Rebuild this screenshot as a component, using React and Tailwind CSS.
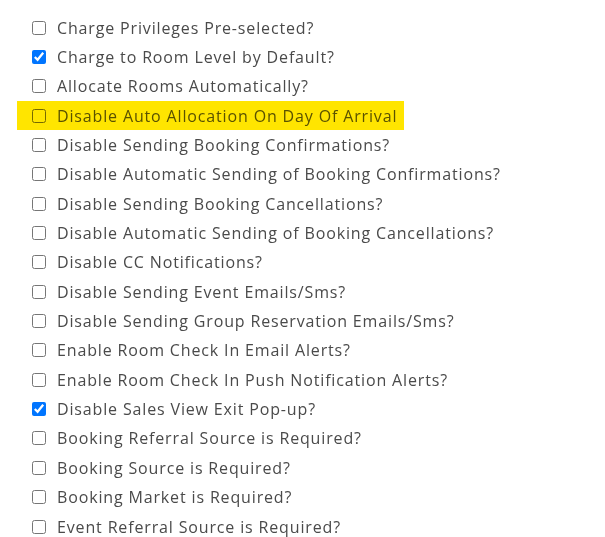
const OPTIONS = [
  { label: "Charge Privileges Pre-selected?", checked: false },
  { label: "Charge to Room Level by Default?", checked: true },
  { label: "Allocate Rooms Automatically?", checked: false },
  { label: "Disable Auto Allocation On Day Of Arrival", checked: false, highlight: true },
  { label: "Disable Sending Booking Confirmations?", checked: false },
  { label: "Disable Automatic Sending of Booking Confirmations?", checked: false },
  { label: "Disable Sending Booking Cancellations?", checked: false },
  { label: "Disable Automatic Sending of Booking Cancellations?", checked: false },
  { label: "Disable CC Notifications?", checked: false },
  { label: "Disable Sending Event Emails/Sms?", checked: false },
  { label: "Disable Sending Group Reservation Emails/Sms?", checked: false },
  { label: "Enable Room Check In Email Alerts?", checked: false },
  { label: "Enable Room Check In Push Notification Alerts?", checked: false },
  { label: "Disable Sales View Exit Pop-up?", checked: true },
  { label: "Booking Referral Source is Required?", checked: false },
  { label: "Booking Source is Required?", checked: false },
  { label: "Booking Market is Required?", checked: false },
  { label: "Event Referral Source is Required?", checked: false },
];

export default function App() {
  return (
    <div className="w-[605px] h-[537px] overflow-hidden bg-white pt-[13px] font-['Open_Sans',sans-serif]">
      {OPTIONS.map((o) => (
        <Row key={o.label} {...o} />
      ))}
    </div>
  );
}

function Row({ label, checked, highlight }) {
  return (
    <label
      className={
        highlight
          ? "ml-[17px] w-[387px] h-[29.35px] pl-[15px] flex items-center gap-[11px] bg-[#ffe500] text-[#5a5200]"
          : "ml-[17px] w-[570px] h-[29.35px] pl-[15px] flex items-center gap-[11px] text-[#4a4a4a]"
      }
    >
      <input
        type="checkbox"
        defaultChecked={checked}
        className={
          highlight
            ? "m-0 w-[14px] h-[14px] shrink-0 mix-blend-multiply"
            : "m-0 w-[14px] h-[14px] shrink-0"
        }
      />
      <span className="text-[16px] leading-none tracking-[0.85px] whitespace-nowrap">{label}</span>
    </label>
  );
}
